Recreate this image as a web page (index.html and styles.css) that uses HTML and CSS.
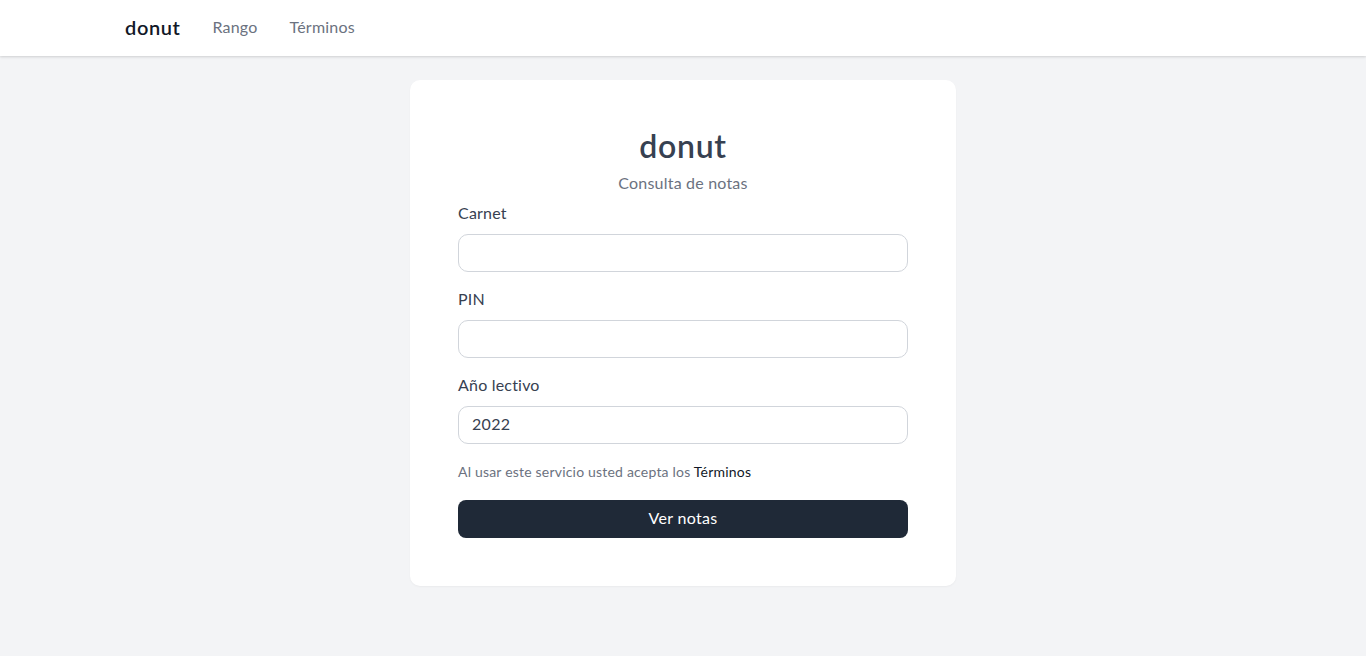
FILE: index.html
```html
<!DOCTYPE html>
<html lang="es">
<head>
<meta charset="utf-8">
<title>donut</title>
<link rel="stylesheet" href="styles.css">
</head>
<body>
<header class="navbar">
  <nav class="nav-inner">
    <a class="brand" href="#">donut</a>
    <a class="nav-link" href="#">Rango</a>
    <a class="nav-link" href="#">Términos</a>
  </nav>
</header>
<main class="main">
  <form class="card">
    <h1 class="title">donut</h1>
    <p class="subtitle">Consulta de notas</p>
    <label class="label" for="carnet">Carnet</label>
    <input class="input" id="carnet" type="text">
    <label class="label" for="pin">PIN</label>
    <input class="input" id="pin" type="password">
    <label class="label" for="anio">Año lectivo</label>
    <input class="input" id="anio" type="text" value="2022">
    <p class="terms">Al usar este servicio usted acepta los <a href="#">Términos</a></p>
    <button class="btn" type="button">Ver notas</button>
  </form>
</main>
</body>
</html>
```
FILE: styles.css
```css
* { box-sizing: border-box; }
html, body { margin: 0; padding: 0; }
body {
  font-family: "Lato", "Noto Sans", sans-serif;
  background: #f3f4f6;
  color: #374151;
  min-height: 656px;
  letter-spacing: 0.2px;
}
.navbar {
  height: 56px;
  background: #fff;
  box-shadow: 0 1px 3px rgba(0,0,0,0.1), 0 1px 2px rgba(0,0,0,0.06);
}
.nav-inner {
  height: 56px;
  display: flex;
  align-items: center;
  padding-left: 125px;
  padding-bottom: 3px;
  gap: 32px;
}
.brand {
  font-size: 20px;
  font-weight: 600;
  letter-spacing: 0.6px;
  color: #111827;
  text-decoration: none;
}
.nav-link {
  font-size: 16px;
  color: #6b7280;
  text-decoration: none;
}
.main {
  display: flex;
  justify-content: center;
  padding-top: 24px;
}
.card {
  width: 546px;
  background: #fff;
  border-radius: 10px;
  padding: 48px;
  display: flex;
  flex-direction: column;
  box-shadow: 0 1px 2px rgba(0,0,0,0.04);
}
.title {
  margin: -2px 0 2px;
  font-size: 32px;
  line-height: 40px;
  font-weight: 600;
  letter-spacing: 0.7px;
  text-align: center;
  color: #374151;
}
.subtitle {
  margin: 4px 0 5px;
  font-size: 16px;
  line-height: 22px;
  padding-bottom: 2px;
  text-align: center;
  color: #6b7280;
}
.label {
  font-size: 16px;
  line-height: 24px;
  color: #374151;
  margin-bottom: 9px;
}
.input {
  height: 38px;
  width: 100%;
  border: 1px solid #d1d5db;
  border-radius: 10px;
  padding: 0 13px 3px;
  font-family: inherit;
  font-size: 16px;
  letter-spacing: 0.3px;
  color: #374151;
  background: #fff;
  margin-bottom: 15px;
}
.terms {
  margin: 3px 0 18px;
  font-size: 14px;
  line-height: 20px;
  color: #6b7280;
}
.terms a {
  color: #111827;
  text-decoration: none;
}
.btn {
  height: 38px;
  width: 100%;
  border: none;
  border-radius: 8px;
  background: #1f2937;
  color: #fff;
  font-family: inherit;
  font-size: 16px;
  letter-spacing: 0.3px;
  padding-bottom: 5px;
  cursor: pointer;
}
```
